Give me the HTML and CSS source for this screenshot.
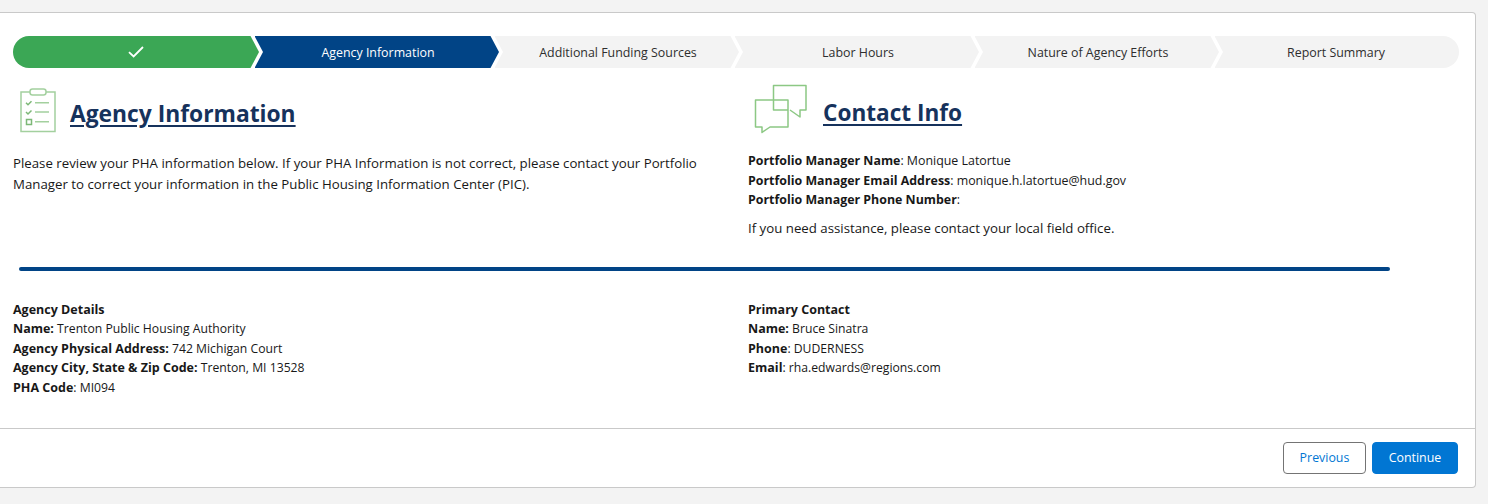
FILE: index.html
```html
<!DOCTYPE html>
<html lang="en">
<head>
<meta charset="utf-8">
<title>Agency Information</title>
<link rel="stylesheet" href="styles.css">
</head>
<body>
<main class="card">
  <div class="card-body">
    <ol class="path">
      <li class="step step-done">
        <svg class="check" viewBox="0 0 16 12" width="16" height="12" aria-hidden="true"><path d="M1 6.2l4.6 4.3L15 1" fill="none" stroke="#fff" stroke-width="1.8"/></svg>
      </li>
      <li class="step step-current"><span>Agency Information</span></li>
      <li class="step"><span>Additional Funding Sources</span></li>
      <li class="step"><span>Labor Hours</span></li>
      <li class="step"><span>Nature of Agency Efforts</span></li>
      <li class="step step-last"><span>Report Summary</span></li>
    </ol>

    <section class="intro">
      <div class="col">
        <header class="head head-agency">
          <svg class="icon-clip" viewBox="0 0 38 46" width="38" height="46" aria-hidden="true">
            <g fill="none" stroke="#a3d09e" stroke-width="1.5">
              <path d="M11 4H2v39.5h34V4H27"/>
              <rect x="11" y="1" width="16" height="6" rx="2.5"/>
              <path d="M16 14.7h14M16 24h14M16 33.7h14"/>
              <rect x="7.5" y="31.5" width="5" height="5" stroke="#7db877"/>
              <path d="M7 14.7l2 2 3.5-3.5M7 24l2 2 3.5-3.5" stroke="#7db877"/>
            </g>
          </svg>
          <h2 class="title">Agency Information</h2>
        </header>
        <p class="lead">Please review your PHA information below. If your PHA Information is not correct, please contact your Portfolio Manager to correct your information in the Public Housing Information Center (PIC).</p>
      </div>
      <div class="col">
        <header class="head head-contact">
          <svg class="icon-chat" viewBox="0 0 54 50" width="54" height="50" aria-hidden="true">
            <g fill="none" stroke="#8cc884" stroke-width="1.5" stroke-linejoin="round">
              <path d="M34 26H19.5V1.5H52V26h-6v7l-10-7"/>
              <path d="M1.5 16H34v27H16l-8 5.5V43H1.5z"/>
            </g>
          </svg>
          <h2 class="title">Contact Info</h2>
        </header>
        <div class="info">
          <div><b>Portfolio Manager Name</b>: Monique Latortue</div>
          <div><b>Portfolio Manager Email Address</b>: monique.h.latortue@hud.gov</div>
          <div><b>Portfolio Manager Phone Number</b>:</div>
        </div>
        <p class="assist">If you need assistance, please contact your local field office.</p>
      </div>
    </section>

    <hr class="rule">

    <section class="details">
      <div class="info">
        <div><b>Agency Details</b></div>
        <div><b>Name:</b> Trenton Public Housing Authority</div>
        <div><b>Agency Physical Address:</b> 742 Michigan Court</div>
        <div><b>Agency City, State &amp; Zip Code:</b> Trenton, MI 13528</div>
        <div><b>PHA Code</b>: MI094</div>
      </div>
      <div class="info">
        <div><b>Primary Contact</b></div>
        <div><b>Name:</b> Bruce Sinatra</div>
        <div><b>Phone</b>: DUDERNESS</div>
        <div><b>Email</b>: rha.edwards@regions.com</div>
      </div>
    </section>
  </div>
  <footer class="actions">
    <button class="btn btn-outline" type="button">Previous</button>
    <button class="btn btn-brand" type="button">Continue</button>
  </footer>
</main>
</body>
</html>
```

FILE: styles.css
```css
* { box-sizing: border-box; }
html, body { margin: 0; height: 100%; }
body {
  background: #f3f3f3;
  color: #181818;
  font-family: "Open Sans", "Noto Sans", sans-serif;
  font-size: 12.4px;
  line-height: 19.5px;
  padding-top: 12px;
  overflow: hidden;
}
.card {
  width: 1476px;
  height: 476px;
  background: #fff;
  border: 1px solid #c9c9c9;
  border-width: 1px 1px 1px 0;
  border-radius: 0 4px 4px 0;
  display: flex;
  flex-direction: column;
}
.card-body { flex: 1; padding: 23px 16px 0 13px; }

.path {
  list-style: none;
  margin: 0;
  padding: 0;
  display: flex;
  height: 32px;
  border-radius: 16px;
  overflow: hidden;
}
.step {
  width: 244.5px;
  flex: none;
  margin-left: -4.5px;
  padding-left: 2.5px;
  background: #f3f3f3;
  color: #2e2e2e;
  display: flex;
  align-items: center;
  justify-content: center;
  clip-path: polygon(0 0, calc(100% - 8.5px) 0, 100% 50%, calc(100% - 8.5px) 100%, 0 100%, 8.5px 50%);
}
.step span { padding-top: 2px; }
.step-done {
  width: 246px;
  margin-left: 0;
  padding-left: 0;
  background: #3ba755;
  clip-path: polygon(0 0, calc(100% - 8.5px) 0, 100% 50%, calc(100% - 8.5px) 100%, 0 100%);
}
.step-current { background: #014486; color: #fff; }
.step-last {
  padding-left: 0;
  padding-right: 1.5px;
  clip-path: polygon(0 0, 100% 0, 100% 100%, 0 100%, 8.5px 50%);
}
.check { display: block; }

.intro { display: grid; grid-template-columns: 735px 1fr; }
.head { display: flex; align-items: center; }
.head-agency { height: 46px; margin-top: 20px; padding-left: 6px; gap: 13px; }
.head-contact { height: 46px; margin-top: 18px; padding-left: 6px; gap: 15px; }
.title {
  margin: 0;
  color: #16325c;
  font-size: 22.8px;
  line-height: 30px;
  font-weight: 700;
  text-decoration: underline;
  text-underline-offset: 3px;
}
.head-agency .title { margin-top: 6px; }
.head-contact .title { margin-top: 8px; font-size: 22.6px; }
.lead { margin: 19px 0 0; font-size: 13.25px; line-height: 21px; }
.info { line-height: 19.5px; }
.head-contact + .info { margin-top: 19px; }
.assist { margin: 9px 0 0; font-size: 13.25px; line-height: 19.5px; }
b { font-weight: 700; }

.rule {
  border: 0;
  height: 4px;
  background: #014486;
  margin: 29px 0 0 6px;
  width: 1371px;
  border-radius: 2px;
}

.details { display: grid; grid-template-columns: 735px 1fr; margin-top: 28.7px; }
.details .info { font-size: 12.2px; }
.details b { font-size: 12.5px; }

.actions {
  height: 59px;
  flex: none;
  border-top: 1px solid #c9c9c9;
  padding: 13px 17px 0 0;
  display: flex;
  justify-content: flex-end;
  gap: 6px;
}
.btn {
  height: 32px;
  border-radius: 4px;
  font: inherit;
  padding: 0;
  cursor: pointer;
}
.btn-outline { width: 83px; background: #fff; border: 1px solid #747474; color: #0176d3; }
.btn-brand { width: 86px; background: #0176d3; border: 1px solid #0176d3; color: #fff; }
```
